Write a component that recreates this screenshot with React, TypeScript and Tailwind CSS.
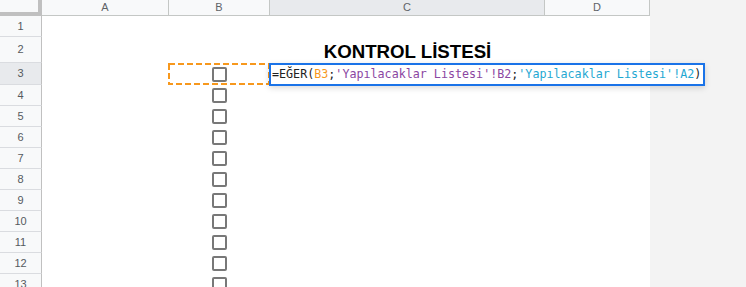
import React from 'react';

const COLS = [
  { label: 'A', w: 'w-[127px]', active: false },
  { label: 'B', w: 'w-[101px]', active: false },
  { label: 'C', w: 'w-[275px]', active: true },
  { label: 'D', w: 'w-[105px]', active: false },
];

const ROWS = [
  { n: 1, h: 'h-[21px]' },
  { n: 2, h: 'h-[26px]' },
  { n: 3, h: 'h-[22px]' },
  ...Array.from({ length: 10 }, (_, i) => ({ n: i + 4, h: 'h-[21px]' })),
];

function Checkbox() {
  return <div className="w-[15px] h-[15px] rounded-[2px] border-2 border-[#787878] bg-white" />;
}

export default function App() {
  return (
    <div className="relative w-[746px] h-[287px] overflow-hidden bg-[#f3f3f3] font-['Liberation_Sans',Arial,sans-serif]">
      <div className="w-[650px] bg-white">
        {/* column headers */}
        <div className="flex h-[16px]">
          <div className="w-[42px] h-[16px] bg-[#f8f9fa] border-r-4 border-b-4 border-[#c0c0c0]" />
          {COLS.map((c) => (
            <div
              key={c.label}
              className={`${c.w} h-[16px] flex items-center justify-center border-r border-b border-[#c4c7c5] text-[11px] leading-none text-[#5f6368] ${c.active ? 'bg-[#e8eaed]' : 'bg-[#f8f9fa]'}`}
            >
              {c.label}
            </div>
          ))}
        </div>

        {/* body rows */}
        {ROWS.map((r) => (
          <div key={r.n} className={`flex ${r.h}`}>
            <div
              className={`w-[42px] flex items-center justify-center border-r border-r-[#c0c0c0] border-b border-b-[#dadce0] text-[11px] leading-none text-[#555a5e] ${r.n === 3 ? 'bg-[#e8eaed]' : 'bg-[#f8f9fa]'}`}
            >
              {r.n}
            </div>
            <div className="w-[127px]" />
            <div className="w-[101px] flex items-center justify-center">
              {r.n >= 3 ? <Checkbox /> : null}
            </div>
            <div className="w-[275px] flex items-end justify-center">
              {r.n === 2 ? (
                <span className="text-[18.67px] font-bold leading-[21px] pb-[1px] text-black">KONTROL LİSTESİ</span>
              ) : null}
            </div>
            <div className="w-[105px]" />
          </div>
        ))}
      </div>

      {/* copy range marker around B3 */}
      <svg className="absolute left-[168px] top-[63px]" width="102" height="22" viewBox="0 0 102 22">
        <rect x="1" y="1" width="100" height="20" fill="none" stroke="#f7981d" strokeWidth="2" strokeDasharray="6 3" />
      </svg>

      {/* in-cell formula editor on C3 */}
      <div className="absolute left-[269px] top-[63px] w-[436px] h-[23px] border-2 border-[#1a73e8] bg-white shadow-[0_2px_6px_rgba(0,0,0,0.15)] pl-[1px] flex items-center">
        <span className="font-['DejaVu_Sans_Mono','Liberation_Mono',monospace] text-[11.7px] leading-none whitespace-pre text-[#222]">
          =EĞER(<span className="text-[#f7981d]">B3</span>;<span className="text-[#8b46a2]">'Yapılacaklar Listesi'!B2</span>;<span className="text-[#1fa8d2]">'Yapılacaklar Listesi'!A2</span>)
        </span>
      </div>
    </div>
  );
}
